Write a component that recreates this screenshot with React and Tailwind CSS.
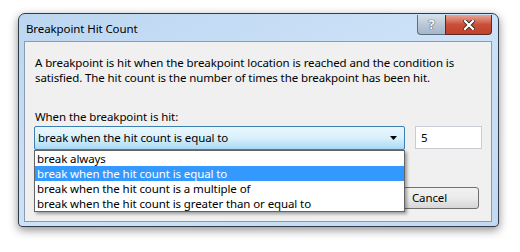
import React from "react";

const font = { fontFamily: '"Noto Sans", "Open Sans", sans-serif' };

function TitleButtons() {
  return (
    <div className="flex h-[20px] mt-[1px] mr-[6px]">
      <div className="w-[28px] h-full rounded-bl-[4px] border border-[#5d6e80] border-r-0 border-t-0 bg-gradient-to-b from-[#d6e0ea] via-[#b9c8d8] to-[#a5b6c9] flex items-center justify-center">
        <span className="text-[13px] font-bold text-white leading-none [text-shadow:0_0_1px_#333,0_0_1px_#333]">?</span>
      </div>
      <div className="w-[47px] h-full rounded-br-[4px] border border-[#5a2a22] border-t-0 bg-gradient-to-b from-[#e8a597] via-[#c94f3b] to-[#c0402c] flex items-center justify-center">
        <svg width="12" height="10" viewBox="0 0 12 10">
          <path d="M2 1 L10 9 M10 1 L2 9" stroke="#3a2a28" strokeWidth="4" strokeLinecap="square" />
          <path d="M2 1 L10 9 M10 1 L2 9" stroke="#ffffff" strokeWidth="2.2" strokeLinecap="square" />
        </svg>
      </div>
    </div>
  );
}

function ComboBox() {
  return (
    <div className="relative w-[371px] h-[24px]">
      <div className="h-full rounded-[2px] border border-[#3c7fb1] bg-gradient-to-b from-[#eaf6fd] via-[#d9f0fc] to-[#a7d9f5] flex items-center pl-[3px] pr-[6px]">
        <span className="flex-1">break when the hit count is equal to</span>
        <svg width="8" height="5" viewBox="0 0 8 5">
          <path d="M0 0 H7 L3.5 4 Z" fill="#000" />
        </svg>
      </div>
      <div className="absolute left-0 top-[24px] w-[371px] bg-white border border-[#646464] shadow-[2px_2px_3px_rgba(0,0,0,0.35)] z-10 leading-[15px]">
        <div className="px-[2px]">break always</div>
        <div className="px-[2px] text-white bg-[#3399ff]">break when the hit count is equal to</div>
        <div className="px-[2px]">break when the hit count is a multiple of</div>
        <div className="px-[2px]">break when the hit count is greater than or equal to</div>
      </div>
    </div>
  );
}

export default function App() {
  return (
    <div className="w-[520px] h-[252px] bg-white overflow-hidden text-[11.5px] tracking-[-0.1px] text-black" style={font}>
      <div className="ml-[18px] mt-[13px] w-[481px] h-[214px] rounded-t-[7px] rounded-b-[4px] border border-[#2f3c4a] bg-gradient-to-br from-[#bcd6f1] via-[#cde2f8] to-[#c2d9f1] shadow-[0_3px_10px_rgba(0,0,0,0.45)] flex flex-col">
        <div className="h-[27px] flex justify-between">
          <span className="pl-[7px] pt-[6px]">Breakpoint Hit Count</span>
          <TitleButtons />
        </div>
        <div className="flex-1 ml-[5px] mr-[6px] mb-[4px] border border-[#8a9bb0] bg-[#f0f0f0] flex flex-col px-[9px] pt-[13px]">
          <p className="leading-[15px] pl-[1px]">
            A breakpoint is hit when the breakpoint location is reached and the condition is
            <br />
            satisfied. The hit count is the number of times the breakpoint has been hit.
          </p>
          <p className="mt-[24px] leading-[15px] pl-[1px]">When the breakpoint is hit:</p>
          <div className="mt-[2px] flex items-start justify-between">
            <ComboBox />
            <div className="w-[67px] h-[23px] border border-[#c8cdd3] bg-white flex items-center pl-[5px]">5</div>
          </div>
          <div className="mt-[37px] flex justify-end pr-[3px]">
            <button className="w-[99px] h-[22px] rounded-[3px] border border-[#707070] bg-gradient-to-b from-[#f2f2f2] via-[#ebebeb] to-[#d6d6d6] text-center">
              Cancel
            </button>
          </div>
        </div>
      </div>
    </div>
  );
}
